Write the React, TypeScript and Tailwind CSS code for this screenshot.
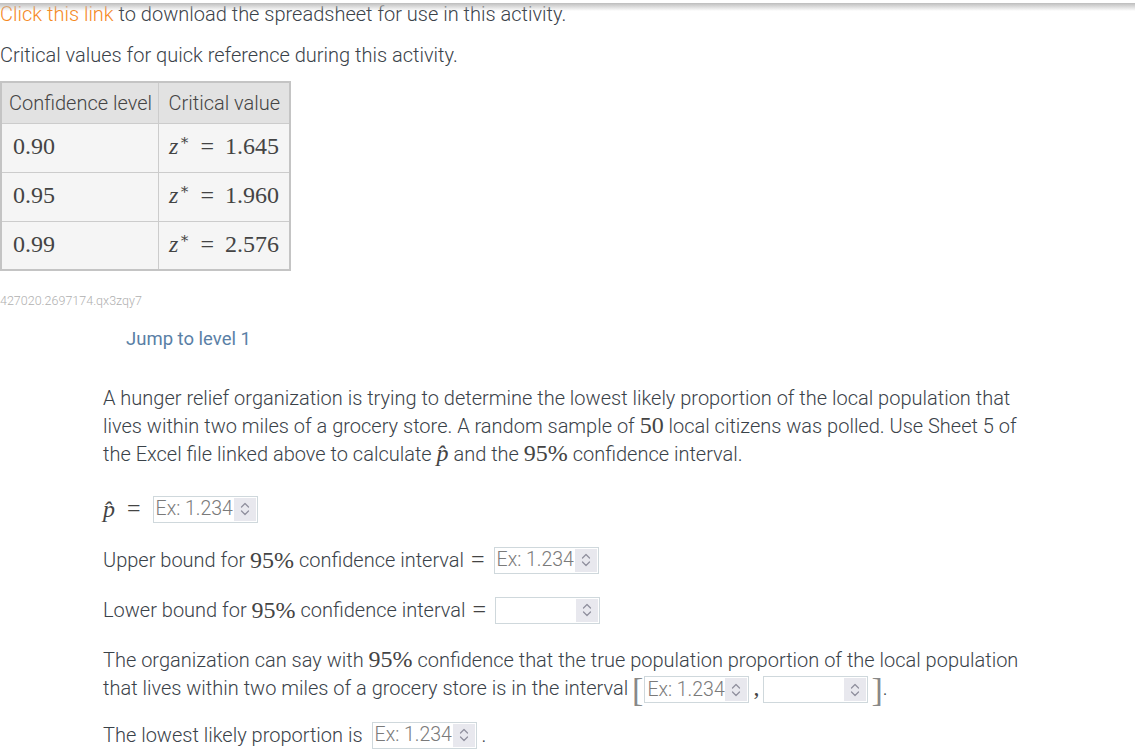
import React from 'react';

const math = { fontFamily: '"Liberation Serif", "DejaVu Serif", serif' };

// Up/down spinner chevrons
function Spinner() {
  return (
    <svg width="10" height="16" viewBox="0 0 10 16" fill="none">
      <path d="M1.5 6L5 2.5L8.5 6M1.5 10L5 13.5L8.5 10" stroke="#8e8e9c" strokeWidth="1.2" strokeLinecap="round" strokeLinejoin="round" />
    </svg>
  );
}

function NumInput({ placeholder = true }: { placeholder?: boolean }) {
  return (
    <span className="inline-flex items-center justify-between w-[105px] h-[27px] border border-[#cfd8dc] bg-white align-middle pl-[2px] pr-[1px] overflow-hidden">
      <span className="text-[19.5px] leading-none whitespace-nowrap text-[#7a7a7a] font-light">{placeholder ? 'Ex: 1.234' : ''}</span>
      <span className="flex shrink-0 items-center justify-center w-[22px] h-[23px] bg-[#e8e8ee]">
        <Spinner />
      </span>
    </span>
  );
}

const M = ({ children }: { children: React.ReactNode }) => (
  <span style={math} className="text-[24px] leading-none font-normal text-[#444]">{children}</span>
);

function Z({ v }: { v: string }) {
  return (
    <span style={math} className="text-[24px] leading-none font-normal text-[#444]">
      <i>z</i>
      <span className="text-[15px] relative -top-[9px] ml-[1px]">∗</span>
      <span className="mx-[11px]">=</span>
      {v}
    </span>
  );
}

export default function App() {
  const rows = [
    { level: '0.90', z: '1.645' },
    { level: '0.95', z: '1.960' },
    { level: '0.99', z: '2.576' },
  ];

  return (
    <div className="relative min-h-screen bg-white text-[#3a4249] font-light" style={{ fontFamily: 'Roboto, "Liberation Sans", sans-serif' }}>
      {/* header shadow */}
      <div className="absolute left-0 right-0 top-[3px] h-[8px] bg-gradient-to-b from-[#bdbdbd] to-white/0 pointer-events-none" />

      <p className="text-[20px] leading-[28px]">
        <span className="text-[#f5891f]">Click this link</span> to download the spreadsheet for use in this activity.
      </p>
      <p className="mt-[13px] text-[20px] leading-[28px]">Critical values for quick reference during this activity.</p>

      <table className="mt-[12px] border-collapse border-2 border-[#c4c4c4]">
        <thead>
          <tr className="bg-[#e2e2e2] h-[41px]">
            <th className="w-[157px] text-left font-light text-[20px] pl-[7px] border border-[#cccccc] text-[#444]">Confidence level</th>
            <th className="w-[132px] text-left font-light text-[20px] pl-[10px] border border-[#cccccc] text-[#444]">Critical value</th>
          </tr>
        </thead>
        <tbody>
          {rows.map((r) => (
            <tr key={r.level} className="bg-[#f5f5f5] h-[49px]">
              <td className="pl-[11px] border border-[#cccccc]">
                <M>{r.level}</M>
              </td>
              <td className="pr-[10px] text-right border border-[#cccccc]">
                <Z v={r.z} />
              </td>
            </tr>
          ))}
        </tbody>
      </table>

      <div className="mt-[22px] text-[12.5px] leading-[16px] text-[#b0b0b0]">427020.2697174.qx3zqy7</div>

      <div className="mt-[18px] ml-[126px] text-[18.5px] leading-[24px] text-[#5a7fa6] font-normal">Jump to level 1</div>

      <div className="ml-[103px] mr-[110px] text-[20px]">
        <p className="mt-[33px] leading-[28px] max-w-[920px]">
          A hunger relief organization is trying to determine the lowest likely proportion of the local population that lives within two miles of a grocery store. A random sample of <M>50</M> local citizens was polled. Use Sheet 5 of the Excel file linked above to calculate <M><i>p̂</i></M> and the <M>95%</M> confidence interval.
        </p>

        <div className="mt-[27px] h-[28px] flex items-center">
          <M><i>p̂</i></M>
          <span className="ml-[12px] mr-[12px]"><M>=</M></span>
          <NumInput />
        </div>

        <div className="mt-[23px] h-[28px] flex items-center">
          <span>Upper bound for&nbsp;</span>
          <M>95%</M>
          <span>&nbsp;confidence interval</span>
          <span className="ml-[7px] mr-[9px]"><M>=</M></span>
          <NumInput />
        </div>

        <div className="mt-[22px] h-[28px] flex items-center">
          <span>Lower bound for&nbsp;</span>
          <M>95%</M>
          <span>&nbsp;confidence interval</span>
          <span className="ml-[7px] mr-[9px]"><M>=</M></span>
          <NumInput placeholder={false} />
        </div>

        <p className="mt-[22px] leading-[28px] max-w-[920px]">
          The organization can say with <M>95%</M> confidence that the true population proportion of the local population that lives within two miles of a grocery store is in the interval{' '}
          <span style={math} className="text-[34px] leading-[20px] align-middle font-normal text-[#888] -ml-[1px] mr-[1px]">[</span>
          <NumInput />
          <span style={math} className="text-[24px] leading-none font-normal mx-[4px] text-[#444]">,</span>
          <NumInput placeholder={false} />
          <span style={math} className="text-[34px] leading-[20px] align-middle font-normal text-[#888] ml-[3px]">]</span>.
        </p>

        <div className="mt-[18px] h-[28px] flex items-center">
          <span>The lowest likely proportion is</span>
          <span className="ml-[9px]" />
          <NumInput />
          <span>&nbsp;.</span>
        </div>
      </div>
    </div>
  );
}
